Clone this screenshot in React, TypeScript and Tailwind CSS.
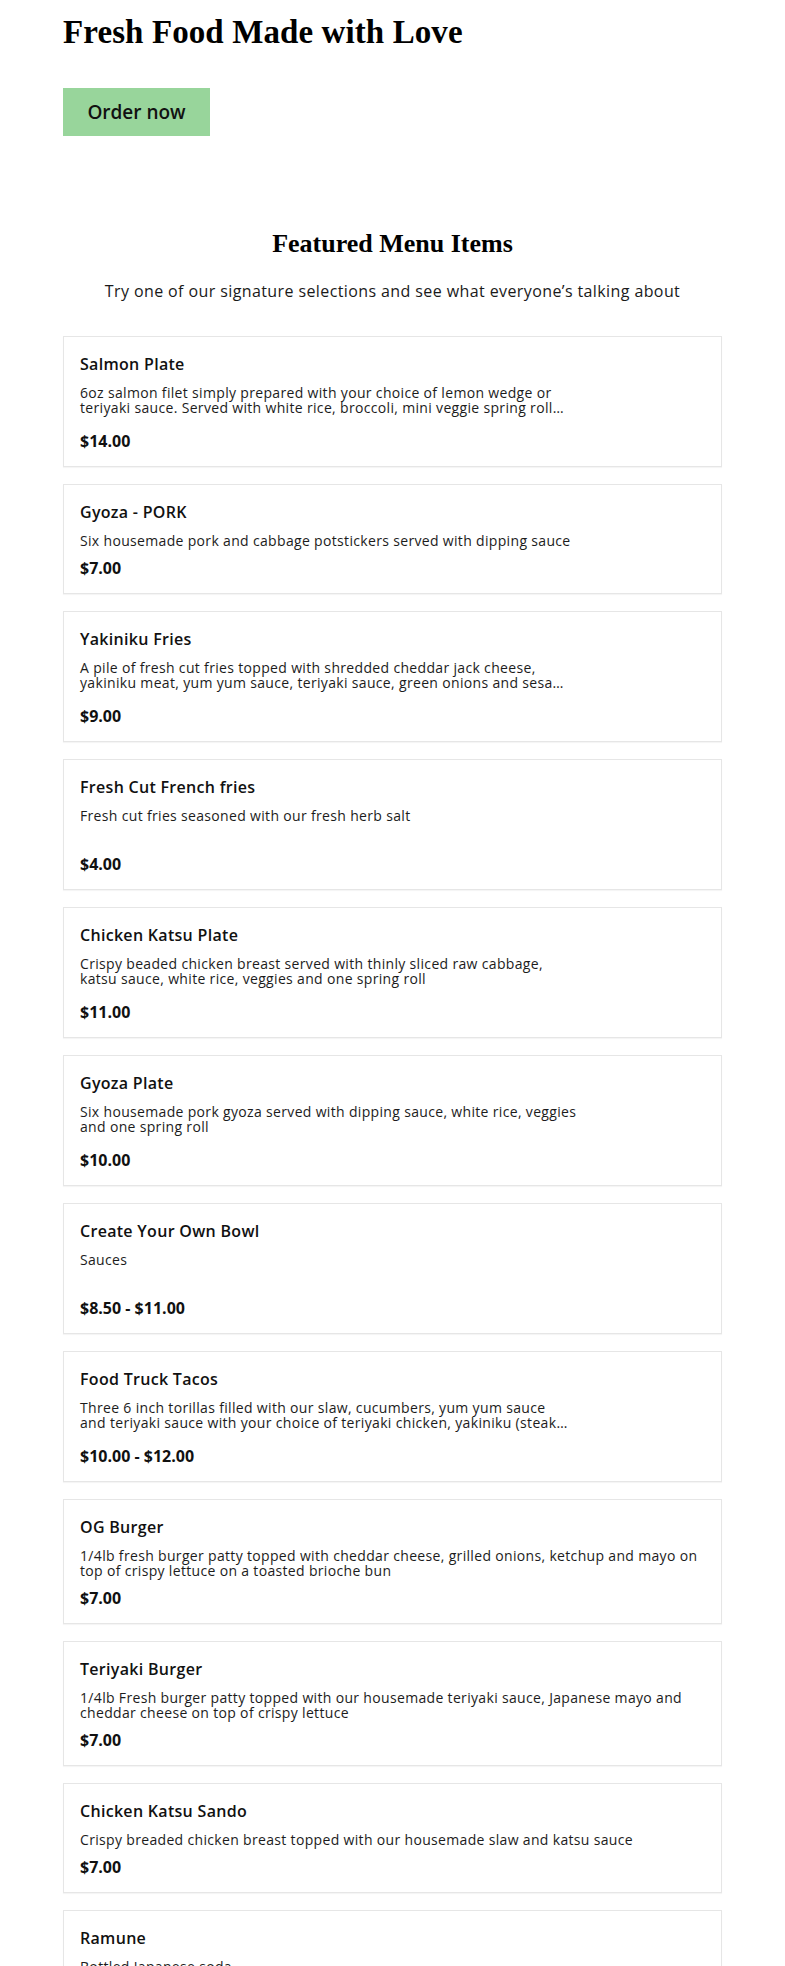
import React from "react";

type Item = {
  title: string;
  lines: string[];
  price: string;
  img: boolean;
};

const items: Item[] = [
  {
    title: "Salmon Plate",
    lines: [
      "6oz salmon filet simply prepared with your choice of lemon wedge or",
      "teriyaki sauce. Served with white rice, broccoli, mini veggie spring roll…",
    ],
    price: "$14.00",
    img: true,
  },
  {
    title: "Gyoza - PORK",
    lines: ["Six housemade pork and cabbage potstickers served with dipping sauce"],
    price: "$7.00",
    img: false,
  },
  {
    title: "Yakiniku Fries",
    lines: [
      "A pile of fresh cut fries topped with shredded cheddar jack cheese,",
      "yakiniku meat, yum yum sauce, teriyaki sauce, green onions and sesa…",
    ],
    price: "$9.00",
    img: true,
  },
  {
    title: "Fresh Cut French fries",
    lines: ["Fresh cut fries seasoned with our fresh herb salt"],
    price: "$4.00",
    img: true,
  },
  {
    title: "Chicken Katsu Plate",
    lines: [
      "Crispy beaded chicken breast served with thinly sliced raw cabbage,",
      "katsu sauce, white rice, veggies and one spring roll",
    ],
    price: "$11.00",
    img: true,
  },
  {
    title: "Gyoza Plate",
    lines: [
      "Six housemade pork gyoza served with dipping sauce, white rice, veggies",
      "and one spring roll",
    ],
    price: "$10.00",
    img: true,
  },
  {
    title: "Create Your Own Bowl",
    lines: ["Sauces"],
    price: "$8.50 - $11.00",
    img: true,
  },
  {
    title: "Food Truck Tacos",
    lines: [
      "Three 6 inch torillas filled with our slaw, cucumbers, yum yum sauce",
      "and teriyaki sauce with your choice of teriyaki chicken, yakiniku (steak…",
    ],
    price: "$10.00 - $12.00",
    img: true,
  },
  {
    title: "OG Burger",
    lines: [
      "1/4lb fresh burger patty topped with cheddar cheese, grilled onions, ketchup and mayo on",
      "top of crispy lettuce on a toasted brioche bun",
    ],
    price: "$7.00",
    img: false,
  },
  {
    title: "Teriyaki Burger",
    lines: [
      "1/4lb Fresh burger patty topped with our housemade teriyaki sauce, Japanese mayo and",
      "cheddar cheese on top of crispy lettuce",
    ],
    price: "$7.00",
    img: false,
  },
  {
    title: "Chicken Katsu Sando",
    lines: ["Crispy breaded chicken breast topped with our housemade slaw and katsu sauce"],
    price: "$7.00",
    img: false,
  },
  {
    title: "Ramune",
    lines: ["Bottled Japanese soda"],
    price: "$3.00",
    img: false,
  },
];

const sans = "font-['Open_Sans',sans-serif]";
const serif = "font-['Liberation_Serif',serif]";

function Card({ item }: { item: Item }) {
  return (
    <div
      className={`flex border border-[#e6e6e6] bg-white shadow-[0_1px_1px_rgba(0,0,0,0.04)] ${
        item.img ? "min-h-[131px]" : ""
      }`}
    >
      <div className="flex flex-1 flex-col pt-[17px] pb-[15px] pl-4 pr-4">
        <div
          className={`${sans} text-[16px] leading-[20px] font-semibold tracking-[0.3px] text-[#111]`}
        >
          {item.title}
        </div>
        <div
          className={`${sans} mt-[11px] text-[14px] leading-[15px] tracking-[0.33px] text-[#1c1c1c]`}
        >
          {item.lines.map((l, i) => (
            <div key={i} className="whitespace-nowrap">
              {l}
            </div>
          ))}
        </div>
        <div
          className={`${sans} ${
            item.img ? "mt-auto pt-[10px]" : "mt-[10px]"
          } text-[16px] leading-[20px] font-bold text-[#111]`}
        >
          {item.price}
        </div>
      </div>
    </div>
  );
}

export default function App() {
  return (
    <div className="min-h-screen bg-white px-[63px] pt-[12px] pb-10 text-black">
      <h1 className={`${serif} text-[33px] leading-[40px] font-bold tracking-[0.1px]`}>
        Fresh Food Made with Love
      </h1>
      <div className="mt-[36px]">
        <button
          className={`${sans} flex h-[48px] w-[147px] items-center justify-center bg-[#98d59b] text-[19px] font-semibold text-[#111]`}
        >
          Order now
        </button>
      </div>

      <h2 className={`${serif} mt-[92px] text-center text-[26px] leading-[32px] font-bold`}>
        Featured Menu Items
      </h2>
      <p
        className={`${sans} mt-[19px] text-center text-[16px] leading-[24px] tracking-[0.4px] text-[#1a1a1a]`}
      >
        Try one of our signature selections and see what everyone’s talking about
      </p>

      <div className="mt-[33px] flex flex-col gap-[17px]">
        {items.map((it) => (
          <Card key={it.title} item={it} />
        ))}
      </div>
    </div>
  );
}
